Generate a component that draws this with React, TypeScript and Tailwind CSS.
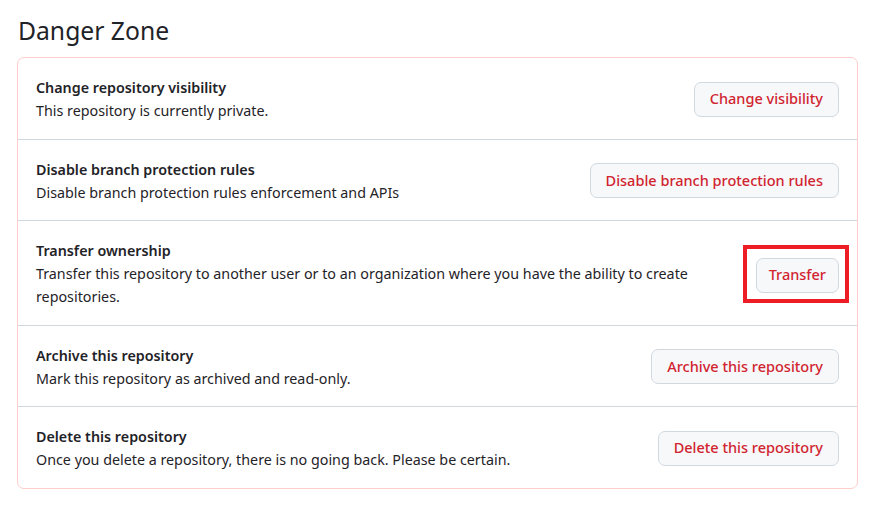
// Danger Zone settings panel
const rows = [
  {
    title: "Change repository visibility",
    desc: "This repository is currently private.",
    action: "Change visibility",
  },
  {
    title: "Disable branch protection rules",
    desc: "Disable branch protection rules enforcement and APIs",
    action: "Disable branch protection rules",
  },
  {
    title: "Transfer ownership",
    desc: "Transfer this repository to another user or to an organization where you have the ability to create repositories.",
    action: "Transfer",
    highlight: true,
  },
  {
    title: "Archive this repository",
    desc: "Mark this repository as archived and read-only.",
    action: "Archive this repository",
  },
  {
    title: "Delete this repository",
    desc: "Once you delete a repository, there is no going back. Please be certain.",
    action: "Delete this repository",
  },
];

function DangerButton({ label, compact }: { label: string; compact?: boolean }) {
  return (
    <button
      type="button"
      className={`h-[35px] rounded-[7px] border border-[#d1d9e0] bg-[#f6f8fa] ${compact ? "px-[12px]" : "px-[15px]"} text-[14.5px] font-medium text-[#d1242f] whitespace-nowrap`}
    >
      {label}
    </button>
  );
}

export default function App() {
  return (
    <div className="min-h-screen bg-white px-[17px] pt-[14px] font-['Noto_Sans',sans-serif] text-[#1f2328]">
      <h2 className="text-[24.7px] leading-[34px] font-normal pl-[1px]">Danger Zone</h2>
      <div className="mt-[9px] w-[841px] rounded-[7px] border border-[#ffcecb]">
        {rows.map((r, i) => (
          <div
            key={r.title}
            className={`flex items-center gap-4 px-[18px] pt-[18px] pb-[16.5px] ${i > 0 ? "border-t border-[#d1d9e0]" : ""}`}
          >
            <div className="flex-1 min-w-0 pr-[20px]">
              <p className="text-[14.3px] leading-[23px] font-semibold">{r.title}</p>
              <p className="text-[14.3px] leading-[23px]">{r.desc}</p>
            </div>
            {r.highlight ? (
              <div className="-ml-[13px] -mr-[10px] border-[4px] border-[#ee1c25] pl-[9px] pr-[6px] pt-[9px] pb-[6px]">
                <DangerButton label={r.action} compact />
              </div>
            ) : (
              <DangerButton label={r.action} />
            )}
          </div>
        ))}
      </div>
    </div>
  );
}
